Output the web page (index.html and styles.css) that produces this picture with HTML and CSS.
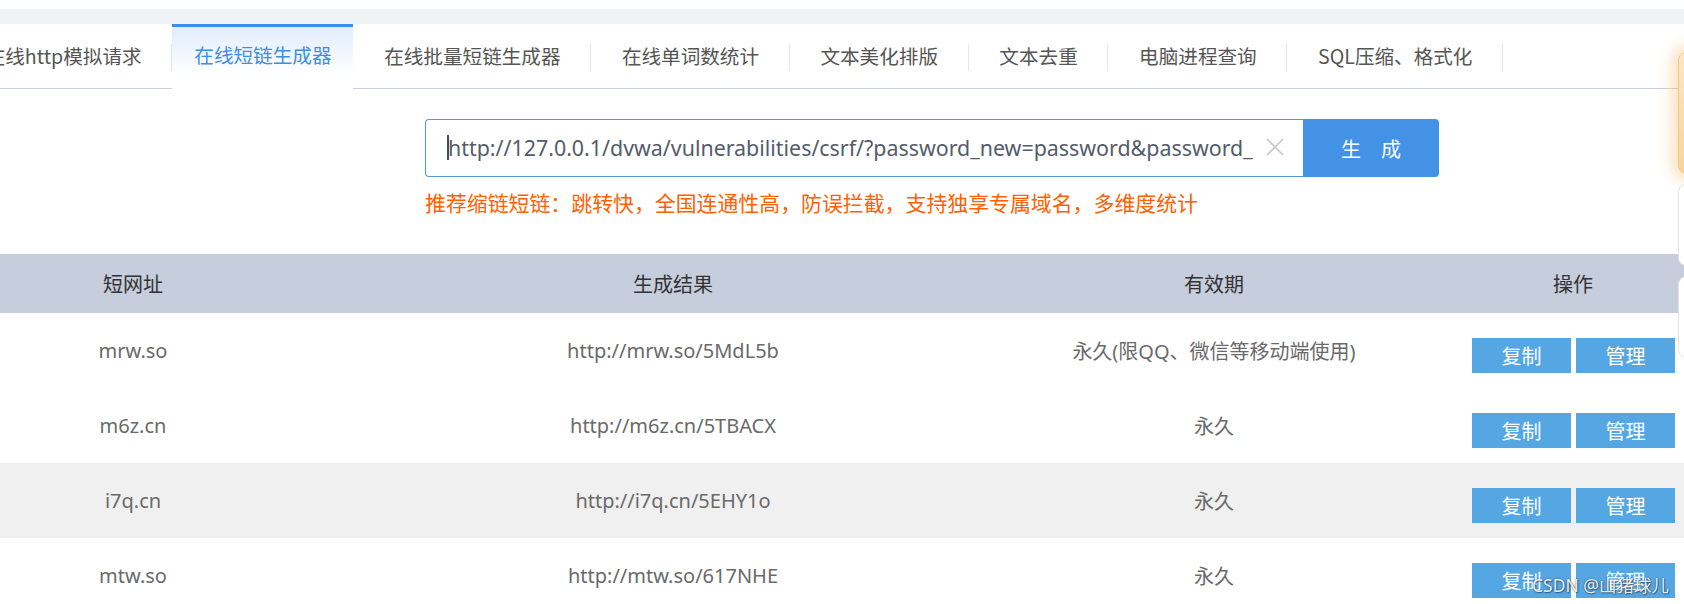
FILE: index.html
```html
<!DOCTYPE html>
<html lang="zh-CN">
<head>
<meta charset="utf-8">
<title>在线短链生成器</title>
<link rel="stylesheet" href="styles.css">
</head>
<body>
<div class="topband"></div>
<nav class="tabs">
  <a class="tab">在线http模拟请求</a>
  <a class="tab active">在线短链生成器</a>
  <a class="tab">在线批量短链生成器</a>
  <a class="tab">在线单词数统计</a>
  <a class="tab">文本美化排版</a>
  <a class="tab">文本去重</a>
  <a class="tab">电脑进程查询</a>
  <a class="tab">SQL压缩、格式化</a>
</nav>
<section class="form">
  <div class="form-row">
    <div class="input">
      <span class="caret"></span>
      <span class="val">http://127.0.0.1/dvwa/vulnerabilities/csrf/?password_new=password&amp;password_</span>
      <svg class="clear" width="18" height="18" viewBox="0 0 18 18"><path d="M1 1L17 17M17 1L1 17" stroke="#c8c8c8" stroke-width="1.6" fill="none"/></svg>
    </div>
    <button class="gen">生　成</button>
  </div>
  <p class="tip">推荐缩链短链：跳转快，全国连通性高，防误拦截，支持独享专属域名，多维度统计</p>
</section>
<div class="table">
  <div class="tr thead">
    <div class="td">短网址</div>
    <div class="td">生成结果</div>
    <div class="td">有效期</div>
    <div class="td">操作</div>
  </div>
  <div class="tr">
    <div class="td">mrw.so</div>
    <div class="td">http://mrw.so/5MdL5b</div>
    <div class="td">永久(限QQ、微信等移动端使用)</div>
    <div class="td ops"><button class="op">复制</button><button class="op">管理</button></div>
  </div>
  <div class="tr">
    <div class="td">m6z.cn</div>
    <div class="td">http://m6z.cn/5TBACX</div>
    <div class="td">永久</div>
    <div class="td ops"><button class="op">复制</button><button class="op">管理</button></div>
  </div>
  <div class="tr alt">
    <div class="td">i7q.cn</div>
    <div class="td">http://i7q.cn/5EHY1o</div>
    <div class="td">永久</div>
    <div class="td ops"><button class="op">复制</button><button class="op">管理</button></div>
  </div>
  <div class="tr">
    <div class="td">mtw.so</div>
    <div class="td">http://mtw.so/617NHE</div>
    <div class="td">永久</div>
    <div class="td ops"><button class="op">复制</button><button class="op">管理</button></div>
  </div>
</div>
<aside class="side">
  <div class="card promo"></div>
  <div class="card"></div>
  <div class="card"></div>
</aside>
<div class="wm">CSDN @山猪球儿</div>
</body>
</html>
```
FILE: styles.css
```css
html, body {
  margin: 0;
  padding: 0;
  background: #fff;
  overflow: hidden;
  width: 1684px;
  height: 604px;
}
body {
  font-family: "Noto Sans", "Noto Sans CJK SC", sans-serif;
  color: #555;
  position: relative;
}
.topband {
  height: 15px;
  margin-top: 9px;
  background: #eff3f6;
}
.tabs {
  display: flex;
  height: 64px;
  border-bottom: 1px solid #c9d0dc;
  margin-left: -45px;
}
.tab {
  position: relative;
  display: flex;
  align-items: center;
  padding: 0 30.7px 2px;
  font-size: 19.6px;
  color: #555;
  white-space: nowrap;
  font-family: "Noto Sans CJK SC", sans-serif;
}
.tab::after {
  content: "";
  position: absolute;
  right: 0;
  top: 20px;
  width: 1px;
  height: 27px;
  background: #e6e6e6;
}
.tab.active {
  height: 55px;
  padding: 0 22px 8px;
  border-top: 3px solid #3d8fe6;
  color: #3d8ee6;
  background: linear-gradient(#e1ecfb, #fff 75%);
}
.tab.active::after { display: none; }
.form {
  margin: 30px 0 0 425px;
}
.form-row {
  display: flex;
  height: 58px;
}
.input {
  box-sizing: border-box;
  width: 878px;
  display: flex;
  align-items: center;
  border: 1px solid #5796dd;
  border-right: none;
  border-radius: 4px 0 0 4px;
  padding: 0 19px 2px 21px;
  overflow: hidden;
}
.caret {
  flex: none;
  width: 2px;
  height: 25px;
  background: #3d4b66;
}
.val {
  flex: 1;
  overflow: hidden;
  white-space: nowrap;
  font-size: 21.4px;
  color: #545c6a;
  margin-left: -1px;
}
.clear {
  flex: none;
  margin-left: 10px;
}
.gen {
  width: 136px;
  height: 58px;
  border: none;
  border-radius: 0 4px 4px 0;
  background: #4392e6;
  color: #fff;
  font-size: 20px;
  font-family: "Noto Sans CJK SC", sans-serif;
  padding: 0;
}
.tip {
  margin: 13px 0 0;
  font-size: 20.9px;
  line-height: 25px;
  color: #ff6000;
  font-family: "Noto Sans CJK SC", sans-serif;
  white-space: nowrap;
}
.table {
  margin: 39px 0 0 -123px;
  width: 1807px;
  font-size: 20px;
  font-family: "Noto Sans", "Noto Sans CJK SC", sans-serif;
}
.tr {
  display: grid;
  grid-template-columns: 512px 568px 514px 204px 1fr;
  height: 75px;
  color: #6a6a6a;
}
.tr.alt { background: #f0f0f0; }
.tr.thead {
  height: 59px;
  background: #c6cddc;
  color: #333;
  font-family: "Noto Sans CJK SC", sans-serif;
}
.td {
  display: flex;
  align-items: center;
  justify-content: center;
  white-space: nowrap;
}
.ops {
  justify-content: flex-start;
  gap: 5px;
  padding: 10px 0 0 1px;
}
.op {
  width: 99px;
  height: 35px;
  border: none;
  padding: 0;
  background: #55a7e3;
  color: #fff;
  font-size: 20px;
  font-family: "Noto Sans CJK SC", sans-serif;
}
.side {
  position: absolute;
  left: 1678px;
  top: 52px;
  width: 40px;
  display: flex;
  flex-direction: column;
  gap: 10px;
}
.card {
  height: 80px;
  background: #fff;
  border: 1px solid #e4e4e4;
  border-radius: 8px;
}
.card.promo {
  height: 120px;
  border-color: #f3c98a;
  background: linear-gradient(#fbe6c4, #f6d49c);
  box-shadow: 0 0 14px 6px rgba(245, 190, 110, 0.45);
}
.wm {
  position: absolute;
  left: 1532px;
  top: 572px;
  font-size: 17.5px;
  color: rgba(255, 255, 255, 0.9);
  text-shadow: 0 0 2px rgba(0,0,0,0.55), 1px 1px 1px rgba(0,0,0,0.35);
  font-family: "Noto Sans", "Noto Sans CJK SC", sans-serif;
  white-space: nowrap;
}
```
